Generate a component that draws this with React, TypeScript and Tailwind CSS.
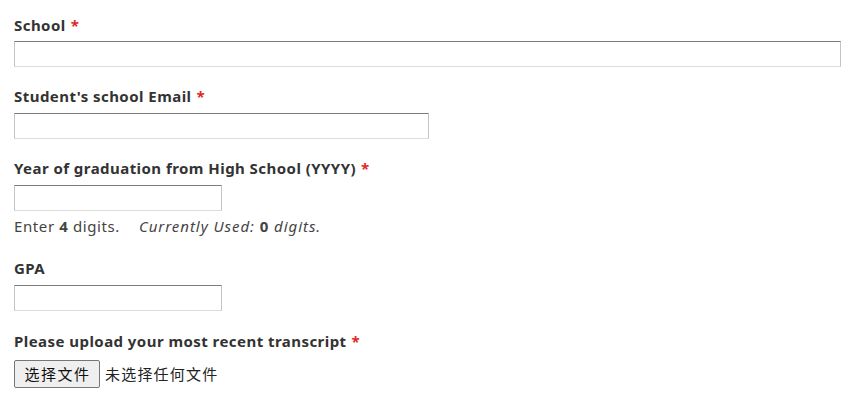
import React from "react";

const font = { fontFamily: '"Noto Sans", "Noto Sans CJK SC", sans-serif' };
const cjk = { fontFamily: '"Noto Sans CJK SC", sans-serif' };

function Label({ text, required }: { text: string; required?: boolean }) {
  return (
    <label className="block text-[15px] leading-[20px] font-bold tracking-[0.45px] text-[#333333]">
      {text}
      {required && <span className="text-[#e32727] ml-[5px]">*</span>}
    </label>
  );
}

const inputCls =
  "block h-[26px] border border-[#c4c4c4] border-t-[#7d7d7d] border-b-[#dcdcdc] bg-white outline-none";

export default function App() {
  return (
    <div className="w-[852px] h-[406px] bg-white pl-[14px] pt-[15px] text-[#333333]" style={font}>
      <Label text="School" required />
      <div className="mt-[6px]">
        <input type="text" className={`${inputCls} w-[827px]`} />
      </div>

      <div className="mt-[19px]">
        <Label text="Student's school Email" required />
      </div>
      <div className="mt-[7px]">
        <input type="text" className={`${inputCls} w-[415px]`} />
      </div>

      <div className="mt-[19px]">
        <Label text="Year of graduation from High School (YYYY)" required />
      </div>
      <div className="mt-[7px]">
        <input type="text" className={`${inputCls} w-[208px]`} />
      </div>
      <div className="mt-[5px] text-[15px] leading-[20px] tracking-[0.6px] text-[#444444]">
        Enter <b>4</b> digits.
        <span className="ml-[19px] italic tracking-[0.95px]">
          Currently Used: <b className="not-italic">0</b> digits.
        </span>
      </div>

      <div className="mt-[22px]">
        <Label text="GPA" />
      </div>
      <div className="mt-[7px]">
        <input type="text" className={`${inputCls} w-[208px]`} />
      </div>

      <div className="mt-[20px]">
        <Label text="Please upload your most recent transcript" required />
      </div>
      <div className="mt-[9px] flex items-center">
        <button
          className="h-[28px] w-[86px] rounded-[2px] border border-[#767676] bg-[#efefef] pl-[1px] text-[15px] tracking-[1.5px] text-[#111111]"
          style={cjk}
        >
          选择文件
        </button>
        <span className="ml-[5px] text-[15px] tracking-[1.2px] text-[#222222]" style={cjk}>
          未选择任何文件
        </span>
      </div>
    </div>
  );
}
